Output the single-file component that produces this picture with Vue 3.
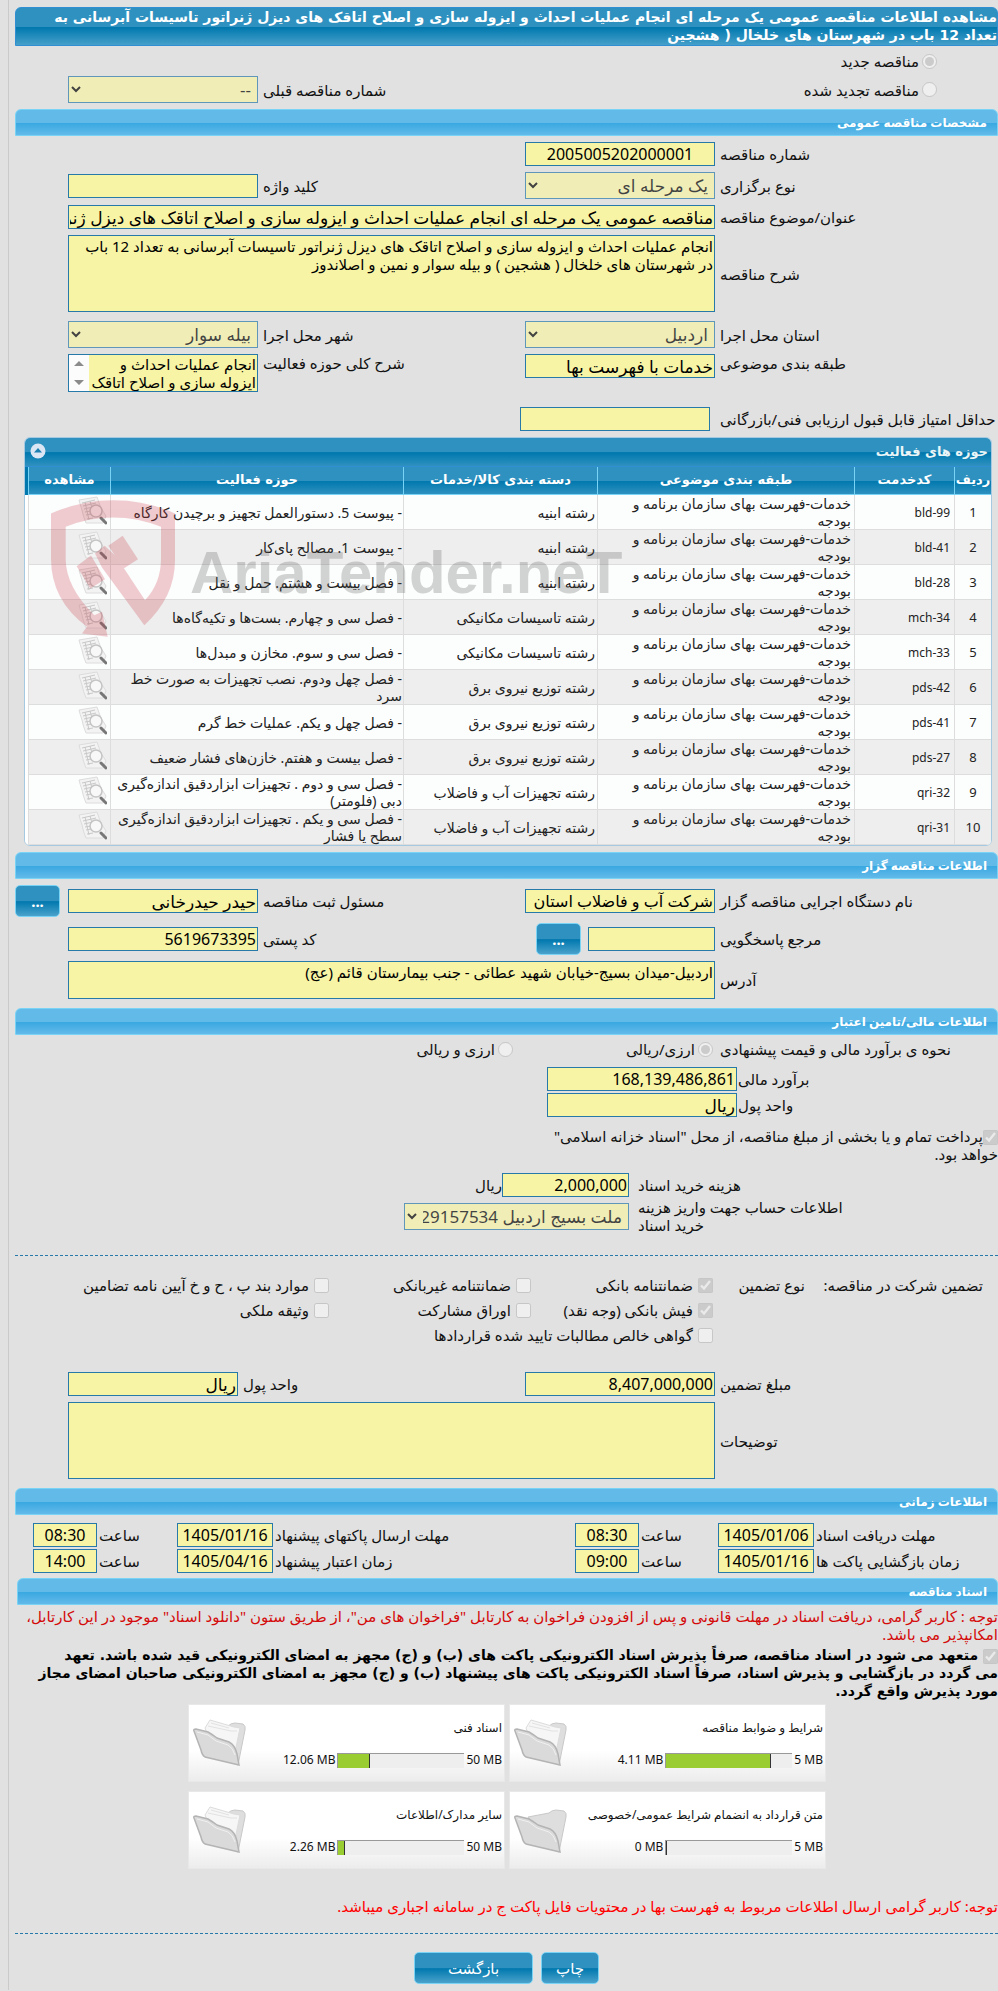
<script setup>
import { ref } from 'vue'

const category = 'خدمات-فهرست بهای سازمان برنامه و بودجه'
const activities = [
  { code: 'bld-99', group: 'رشته ابنیه', field: '- پیوست 5. دستورالعمل تجهیز و برچیدن کارگاه' },
  { code: 'bld-41', group: 'رشته ابنیه', field: '- پیوست 1. مصالح پای‌کار' },
  { code: 'bld-28', group: 'رشته ابنیه', field: '- فصل بیست و هشتم. حمل و نقل' },
  { code: 'mch-34', group: 'رشته تاسیسات مکانیکی', field: '- فصل سی و چهارم. بست‌ها و تکیه‌گاه‌ها' },
  { code: 'mch-33', group: 'رشته تاسیسات مکانیکی', field: '- فصل سی و سوم. مخازن و مبدل‌ها' },
  { code: 'pds-42', group: 'رشته توزیع نیروی برق', field: '- فصل چهل ودوم. نصب تجهیزات به صورت خط سرد' },
  { code: 'pds-41', group: 'رشته توزیع نیروی برق', field: '- فصل چهل و یکم. عملیات خط گرم' },
  { code: 'pds-27', group: 'رشته توزیع نیروی برق', field: '- فصل بیست و هفتم. خازن‌های فشار ضعیف' },
  { code: 'qri-32', group: 'رشته تجهیزات آب و فاضلاب', field: '- فصل سی و دوم . تجهیزات ابزاردقیق اندازه‌گیری دبی (فلومتر)' },
  { code: 'qri-31', group: 'رشته تجهیزات آب و فاضلاب', field: '- فصل سی و یکم . تجهیزات ابزاردقیق اندازه‌گیری سطح یا فشار' },
]
const folders = [
  { title: 'شرایط و ضوابط مناقصه', used: '4.11 MB', max: '5 MB', pct: 83, full: true },
  { title: 'اسناد فنی', used: '12.06 MB', max: '50 MB', pct: 25, full: true },
  { title: 'متن قرارداد به انضمام شرایط عمومی/خصوصی', used: '0 MB', max: '5 MB', pct: 0, full: false },
  { title: 'سایر مدارک/اطلاعات', used: '2.26 MB', max: '50 MB', pct: 5, full: true },
]
const schedule = [
  [
    { id: 'get', label: 'مهلت دریافت اسناد', date: '1405/01/06', time: '08:30' },
    { id: 'send', label: 'مهلت ارسال پاکتهای پیشنهاد', date: '1405/01/16', time: '08:30' },
  ],
  [
    { id: 'open', label: 'زمان بازگشایی پاکت ها', date: '1405/01/16', time: '09:00' },
    { id: 'valid', label: 'زمان اعتبار پیشنهاد', date: '1405/04/16', time: '14:00' },
  ],
]
const tableOpen = ref(true)
</script>

<template>
  <main class="page" dir="rtl">
    <h1 class="title-bar">
      <span>مشاهده اطلاعات مناقصه عمومی یک مرحله ای انجام عملیات احداث و ایزوله سازی و اصلاح اتاقک های دیزل ژنراتور تاسیسات آبرسانی به</span>
      <span>تعداد 12 باب در شهرستان های خلخال ( هشجین</span>
    </h1>

    <div class="row kind">
      <label class="radio"><input type="radio" name="kind" checked disabled>مناقصه جدید</label>
    </div>
    <div class="row">
      <label class="radio"><input type="radio" name="kind" disabled>مناقصه تجدید شده</label>
      <label class="lbl third" for="prev">شماره مناقصه قبلی</label>
      <select id="prev" class="fourth" disabled><option>--</option></select>
    </div>

    <h2 class="bar">مشخصات مناقصه عمومی</h2>
    <div class="row">
      <label class="lbl" for="num">شماره مناقصه</label>
      <input id="num" class="center" value="2005005202000001" readonly>
    </div>
    <div class="row">
      <label class="lbl" for="type">نوع برگزاری</label>
      <select id="type" disabled><option>یک مرحله ای</option></select>
      <label class="lbl" for="key">کلید واژه</label>
      <input id="key" readonly>
    </div>
    <div class="row">
      <label class="lbl" for="subj">عنوان/موضوع مناقصه</label>
      <input id="subj" class="wide large" value="مناقصه عمومی یک مرحله ای انجام عملیات احداث و ایزوله سازی و اصلاح اتاقک های دیزل ژنراتور تاسیسات آبرسانی به تعداد 12 باب" readonly>
    </div>
    <div class="row">
      <label class="lbl" for="desc">شرح مناقصه</label>
      <textarea id="desc" class="wide tall" readonly>انجام عملیات احداث و ایزوله سازی و اصلاح اتاقک های دیزل ژنراتور تاسیسات آبرسانی به تعداد 12 باب
در شهرستان های خلخال ( هشجین ) و بیله سوار و نمین و اصلاندوز</textarea>
    </div>
    <div class="row spaced">
      <label class="lbl" for="prov">استان محل اجرا</label>
      <select id="prov" disabled><option>اردبیل</option></select>
      <label class="lbl" for="city">شهر محل اجرا</label>
      <select id="city" disabled><option>بیله سوار</option></select>
    </div>
    <div class="row top">
      <label class="lbl" for="cat">طبقه بندی موضوعی</label>
      <input id="cat" class="large" value="خدمات با فهرست بها" readonly>
      <label class="lbl" for="scope">شرح کلی حوزه فعالیت</label>
      <div class="scroller">
        <textarea id="scope" readonly>انجام عملیات احداث و
ایزوله سازی و اصلاح اتاقک</textarea>
        <svg viewBox="0 0 20 36" width="20" height="36" aria-hidden="true">
          <rect width="20" height="36" fill="#fcfcfc" />
          <path d="M5 11 L10 6 L15 11 Z M5 25 L15 25 L10 30 Z" fill="#8b8b8b" />
        </svg>
      </div>
    </div>
    <div class="row score">
      <label class="lbl" for="score">حداقل امتیاز قابل قبول ارزیابی فنی/بازرگانی</label>
      <input id="score" readonly>
    </div>

    <section class="panel">
      <header class="panel-head">
        <h3>حوزه های فعالیت</h3>
        <button type="button" class="toggle" aria-label="جمع کردن" @click="tableOpen = !tableOpen">
          <svg viewBox="0 0 16 16" width="16" height="16"><circle cx="8" cy="8" r="7.5" fill="#dbe6f5" /><path d="M4 9.500 L8 5 L12 9.500 Z" fill="#1c7fb0" /></svg>
        </button>
      </header>
      <table v-show="tableOpen">
        <colgroup><col class="c1"><col class="c2"><col class="c3"><col class="c4"><col><col class="c6"></colgroup>
        <thead>
          <tr><th>ردیف</th><th>کدخدمت</th><th>طبقه بندی موضوعی</th><th>دسته بندی کالا/خدمات</th><th>حوزه فعالیت</th><th>مشاهده</th></tr>
        </thead>
        <tbody>
          <tr v-for="(a, i) in activities" :key="a.code">
            <td class="idx">{{ i + 1 }}</td>
            <td class="code">{{ a.code }}</td>
            <td>{{ category }}</td>
            <td class="group">{{ a.group }}</td>
            <td class="field">{{ a.field }}</td>
            <td class="view">
              <button type="button" aria-label="مشاهده">
                <svg viewBox="0 0 29 29" width="29" height="29">
                  <path d="M1 4 L19 1 Q21 7 23 12 L28 20 L25 27 L8 27 Q5 20 4 14 Q2 8 1 4 Z" fill="#f3f3f3" stroke="#dcdcdc" />
                  <path d="M4 7 L17 4 M5 10 L18 7 M6 13 L15 11 M7 16 L13 15 M8 19 L13 18 M9 23 L15 22 M7 6 L11 24 M12 5 L14 12" stroke="#c8c8c8" fill="none" />
                  <circle cx="18" cy="15" r="6" fill="#f8f8f8" fill-opacity=".85" stroke="#c4c4c4" stroke-width="1.500" />
                  <path d="M23 22 L28 27" stroke="#777" stroke-width="3" stroke-linecap="round" />
                </svg>
              </button>
            </td>
          </tr>
        </tbody>
      </table>
      <div class="mark" aria-hidden="true">
        <svg viewBox="147 207 378 416" width="126" height="139">
          <path fill="#c93a48" d="M150 250 Q240 210 337 210 Q435 210 522 250 V390 Q522 500 430 585 L303 412 L282 370 L311 347 L345 378 L432 510 Q480 460 480 385 V290 Q410 262 337 262 Q262 262 194 290 V385 Q194 470 280 555 L303 545 L320 620 L243 610 L258 590 Q150 510 150 385 Z" />
          <path fill="#c93a48" d="M322 347 L365 317 L411 387 L368 415 Z M227 408 L270 376 L312 447 L268 475 Z" />
        </svg>
        <span>AriaTender.neT</span>
      </div>
    </section>

    <h2 class="bar">اطلاعات مناقصه گزار</h2>
    <div class="row owner">
      <label class="lbl" for="org">نام دستگاه اجرایی مناقصه گزار</label>
      <input id="org" value="شرکت آب و فاضلاب استان" readonly>
      <label class="lbl" for="resp">مسئول ثبت مناقصه</label>
      <input id="resp" class="large" value="حیدر حیدرخانی" readonly>
      <button type="button" class="btn dots">...</button>
    </div>
    <div class="row owner">
      <label class="lbl" for="ref">مرجع پاسخگویی</label>
      <div class="pair"><input id="ref" readonly><button type="button" class="btn dots">...</button></div>
      <label class="lbl" for="zip">کد پستی</label>
      <input id="zip" class="num" value="5619673395" readonly>
    </div>
    <div class="row">
      <label class="lbl" for="addr">آدرس</label>
      <textarea id="addr" class="wide short" readonly>اردبیل-میدان بسیج-خیابان شهید عطائی - جنب بیمارستان قائم (عج)</textarea>
    </div>

    <h2 class="bar after">اطلاعات مالی/تامین اعتبار</h2>
    <div class="row price" role="radiogroup" aria-labelledby="price">
      <span id="price" class="lbl">نحوه ی برآورد مالی و قیمت پیشنهادی</span>
      <div class="options">
        <label><input type="radio" name="cur" checked disabled>ارزی/ریالی</label>
        <label><input type="radio" name="cur" disabled>ارزی و ریالی</label>
      </div>
    </div>
    <div class="money">
      <label for="est">برآورد مالی</label><input id="est" class="num" value="168,139,486,861" readonly>
      <label for="unit">واحد پول</label><input id="unit" class="large" value="ریال" readonly>
    </div>
    <label class="treasury"><input type="checkbox" checked disabled><span>پرداخت تمام و یا بخشی از مبلغ مناقصه، از محل "اسناد خزانه اسلامی"</span><span class="line">خواهد بود.</span></label>
    <div class="cost">
      <label for="cost">هزینه خرید اسناد</label>
      <div class="amount"><input id="cost" class="num" value="2,000,000" readonly><span>ریال</span></div>
      <label for="acc">اطلاعات حساب جهت واریز هزینه<br>خرید اسناد</label>
      <select id="acc" disabled><option>ملت بسیج اردبیل 29157534</option></select>
    </div>

    <hr>
    <div class="guarantee">
      <span class="g-title">تضمین شرکت در مناقصه:</span>
      <span class="g-type">نوع تضمین</span>
      <div class="checks">
        <label><input type="checkbox" checked disabled>ضمانتنامه بانکی</label>
        <label><input type="checkbox" disabled>ضمانتنامه غیربانکی</label>
        <label><input type="checkbox" disabled>موارد بند پ ، ح و خ آیین نامه تضامین</label>
        <label><input type="checkbox" checked disabled>فیش بانکی (وجه نقد)</label>
        <label><input type="checkbox" disabled>اوراق مشارکت</label>
        <label><input type="checkbox" disabled>وثیقه ملکی</label>
        <label class="long"><input type="checkbox" disabled>گواهی خالص مطالبات تایید شده قراردادها</label>
      </div>
    </div>
    <div class="row deposit">
      <label class="lbl" for="dep">مبلغ تضمین</label>
      <input id="dep" class="num" value="8,407,000,000" readonly>
      <label class="lbl" for="depunit">واحد پول</label>
      <input id="depunit" class="large" value="ریال" readonly>
    </div>
    <div class="row">
      <label class="lbl" for="notes">توضیحات</label>
      <textarea id="notes" class="wide tall" readonly></textarea>
    </div>

    <h2 class="bar after">اطلاعات زمانی</h2>
    <div class="times">
      <template v-for="line in schedule">
        <template v-for="t in line" :key="t.id">
          <label :for="t.id + 'd'">{{ t.label }}</label>
          <input :id="t.id + 'd'" class="center" :value="t.date" readonly>
          <label :for="t.id + 't'">ساعت</label>
          <input :id="t.id + 't'" class="center" :value="t.time" readonly>
        </template>
      </template>
    </div>

    <h2 class="bar docs">اسناد مناقصه</h2>
    <p class="note">
      <span>توجه : کاربر گرامی، دریافت اسناد در مهلت قانونی و پس از افزودن فراخوان به کارتابل "فراخوان های من"، از طریق ستون "دانلود اسناد" موجود در این کارتابل،</span>
      <span>امکانپذیر می باشد.</span>
    </p>
    <label class="commit">
      <span><input type="checkbox" checked disabled> متعهد می شود در اسناد مناقصه، صرفاً پذیرش اسناد الکترونیکی پاکت های (ب) و (ج) مجهز به امضای الکترونیکی قید شده باشد. تعهد</span>
      <span>می گردد در بازگشایی و پذیرش اسناد، صرفاً اسناد الکترونیکی پاکت های پیشنهاد (ب) و (ج) مجهز به امضای الکترونیکی صاحبان امضای مجاز</span>
      <span>مورد پذیرش واقع گردد.</span>
    </label>
    <div class="folders">
      <article v-for="f in folders" :key="f.title" class="folder">
        <div class="info">
          <a href="#">{{ f.title }}</a>
          <div class="usage">
            <span>{{ f.max }}</span>
            <div class="track"><i :style="{ width: f.pct + '%' }"></i></div>
            <span>{{ f.used }}</span>
          </div>
        </div>
        <svg viewBox="0 0 54 48" width="54" height="48" aria-hidden="true">
          <path d="M14 11 L35 7 Q38 4 42 4 L50 5 Q53 7 52 11 L45 46 L30 40 Z" fill="#dedede" stroke="#c9c9c9" />
          <path v-if="f.full" d="M12 9 L17 1 L41 8 L47 9 L41 38 L20 30 Z" fill="#f6f6f6" stroke="#dcdcdc" />
          <path v-if="f.full" d="M15 7 L38 12 L44 12 M18 4 L36 9" fill="none" stroke="#e2e2e2" />
          <path d="M1 12 Q0 10 3 10 L15 13 Q20 16 24 19 L36 23 Q42 26 44 35 L46 46 L12 38 Q9 36 8 31 Z" fill="#dadada" stroke="#b4b4b4" stroke-width="1.500" />
          <path d="M4 13 L15 16 L23 22 L35 26 Q40 29 42 36" fill="none" stroke="#f0f0f0" />
        </svg>
      </article>
    </div>
    <p class="alert">توجه: کاربر گرامی ارسال اطلاعات مربوط به فهرست بها در محتویات فایل پاکت ج در سامانه اجباری میباشد.</p>
    <hr>
    <div class="actions">
      <button type="button" class="btn print">چاپ</button>
      <button type="button" class="btn back">بازگشت</button>
    </div>
  </main>
</template>

<style>
html { background: #e1e1e1; overflow-x: hidden; }
</style>

<style scoped>
* { box-sizing: border-box; }
.page {
  margin-left: 8px; padding: 7px 0 6px 6px; border-left: 1px solid #cacaca;
  font-family: "Noto Sans", "DejaVu Sans", sans-serif; font-size: 15px; line-height: 18px; color: #111; overflow: hidden;
}
.title-bar {
  margin: 0; height: 39px; border: 1px solid #2f8fd2; border-radius: 6px 6px 0 0; color: #fff;
  font-family: "DejaVu Sans", sans-serif; font-size: 14px; line-height: 18px; white-space: nowrap;
  background: linear-gradient(#2f91bf 0 50%, #0078ae 52%, #459fc9);
}
.title-bar span, .note span, .commit span { display: block; white-space: nowrap; }
.bar {
  margin: 6px 0 0; height: 27px; padding: 0 10px; border: 1px solid #78d3f5; border-radius: 6px 6px 0 0;
  font-size: 12px; line-height: 25px; color: #fff; background: linear-gradient(#62bae9 0 50%, #39a8e1 52%, #62bae9);
}
.bar.after { margin-top: 9px; }
.bar.docs { margin: 5px 0 0 2px; }
.row {
  display: grid; grid-template-columns: 278px 190px minmax(0, 1fr) 190px; column-gap: 5px;
  padding-left: 53px; margin-top: 6px; align-items: center;
}
.lbl { text-align: end; white-space: nowrap; }
.wide { grid-column: 2 / 5; }
.third { grid-column: 3; }
.fourth { grid-column: 4; }
.row.kind { height: 30px; margin-top: 0; }
.row.kind + .row { margin-top: 0; }
.row.spaced { margin-top: 9px; }
.row.top { align-items: start; }
.row.score { margin-top: 15px; column-gap: 10px; }
.radio { display: flex; align-items: center; gap: 3px; padding-right: 61px; }
input, select, textarea {
  display: block; width: 100%; margin: 0; padding: 0 1px; height: 24px; border: 1px solid #2779aa; border-radius: 0;
  background: #f7f4a5; color: #000; font-family: inherit; font-size: 16px; outline: none;
}
input.large { font-size: 17px; }
select { height: 27px; padding: 0 2px; opacity: .7; font-size: 17px; }
textarea { font-size: 15px; line-height: 18px; resize: none; overflow: hidden; padding: 1px; }
input[type=radio], input[type=checkbox] { width: 15px; height: 15px; padding: 0; flex: none; }
.tall { height: 77px; }
.short { height: 38px; }
.center { text-align: center; }
.num { direction: ltr; text-align: right; }
.scroller { display: flex; border: 1px solid #2779aa; }
.scroller textarea { border: 0; height: 36px; flex: 1; min-width: 0; white-space: pre; padding: 0 1px; }

.panel { position: relative; margin: 6px 6px 0 9px; border: 1px solid #a6c9e2; border-radius: 6px; background: #fff; overflow: hidden; }
.panel-head {
  display: flex; align-items: center; justify-content: space-between; height: 29px; padding: 0 3px 0 5px;
  color: #eaf5f7; border-bottom: 1px solid #2f8fd2; background: linear-gradient(#2f91bf 0 50%, #0078ae 52%, #2f91bf);
}
.panel-head h3 { margin: 0; font-family: "DejaVu Sans", sans-serif; font-size: 13px; }
.toggle, .view button { display: block; padding: 0; border: 0; background: none; }
table { width: 100%; table-layout: fixed; border-collapse: separate; border-spacing: 0; padding-left: 3px; background: linear-gradient(#0078ae 0 28px, #fff 28px); }
.c1 { width: 37px; } .c2 { width: 100px; } .c3 { width: 257px; } .c4 { width: 194px; } .c6 { width: 82px; }
th {
  height: 28px; padding: 0 0 2px; color: #fff; font-family: "DejaVu Sans", sans-serif; font-size: 13px; border-left: 1px solid #78d3f5; border-bottom: 1px solid #78d3f5;
  background: linear-gradient(#2f91bf 0 50%, #0078ae 52%, #2f91bf); white-space: nowrap;
}
td { height: 35px; padding: 0 3px; border-left: 1px solid #ddd; border-bottom: 1px solid #ddd; font-size: 14px; line-height: 17px; color: #222; background: #fcfdfd; }
tbody tr:nth-child(even) td { background: #eee; }
td.idx { text-align: center; font-size: 13px; }
td.code { direction: ltr; text-align: right; font-size: 12px; }
td.field { padding: 0 1px; }
td.group { padding: 0 2px; }
.mark { position: absolute; left: 25px; top: 61px; display: flex; flex-direction: row-reverse; gap: 14px; opacity: .25; pointer-events: none; }
.mark span { font: 700 60px/1 "Liberation Sans", sans-serif; color: #555; direction: ltr; padding-top: 44px; white-space: nowrap; }

.btn {
  border: 1px solid #78d3f5; border-radius: 5px; color: #fff; font-family: inherit; font-size: 15px; height: 32px; padding: 0;
  background: linear-gradient(#2f91bf 0 50%, #0078ae 52%, #4aa2cb);
}
.dots { width: 45px; font-weight: 700; }
.row.owner { grid-template-columns: 278px 190px minmax(0, 1fr) 190px 48px; padding-left: 0; }
.row.owner .dots { justify-self: end; }
.pair { display: flex; gap: 7px; align-items: center; }
.pair input { width: 127px; }
.pair .btn { flex: none; }
.row.price { height: 28px; margin-top: 0; }
.options { grid-column: 2 / 5; display: flex; padding-right: 2px; }
.options label { display: flex; align-items: center; gap: 3px; width: 200px; }
.money { display: grid; grid-template-columns: 260px 190px; gap: 2px 1px; margin-top: 4px; align-items: center; text-align: end; }
.money input { text-align: start; }
.money input.num { text-align: right; }
.treasury { display: block; margin-top: 10px; }
.treasury input { display: inline-block; vertical-align: middle; }
.line { display: block; }
.cost { display: grid; grid-template-columns: 360px 225px; column-gap: 9px; row-gap: 1px; margin-top: 10px; align-items: center; text-align: end; }
.amount { display: flex; align-items: center; }
.amount input { width: 127px; }
hr { margin: 21px 0 0; border: 0; border-top: 1px dashed #2779aa; }
.guarantee { display: flex; margin-top: 17px; padding-right: 15px; line-height: 25px; }
.g-title { width: 178px; }
.g-type { width: 92px; }
.checks { flex: 1; display: grid; grid-template-columns: 182px 202px 1fr; }
.checks label { display: flex; align-items: center; gap: 5px; white-space: nowrap; }
.checks .long { grid-column: span 3; }
.row.deposit { margin-top: 24px; grid-template-columns: 278px 190px minmax(0, 1fr) 170px; }
.times { display: grid; grid-template-columns: 182px 96px 75px 64px minmax(0, 1fr) 96px 76px 64px; gap: 2px; margin-top: 8px; padding-left: 18px; align-items: center; text-align: end; }
.note { margin: 2px 0 0; color: #d40b0b; }
.commit { display: block; margin-top: 3px; font-family: "DejaVu Sans", sans-serif; font-size: 14px; font-weight: 700; color: #000; }
.commit input { display: inline-block; vertical-align: middle; }
.folders { display: grid; grid-template-columns: 317px 317px; gap: 9px 4px; margin: 4px 172px 0 0; }
.folder { height: 78px; display: flex; justify-content: space-between; align-items: center; padding: 0 2px 0 4px; border: 1px solid #e8e8e8; background: linear-gradient(#fff 60%, #ececec); }
.info { align-self: stretch; display: flex; flex-direction: column; padding-top: 14px; gap: 14px; font-size: 12px; }
.info a { color: #111; text-decoration: none; }
.usage { display: flex; align-items: center; gap: 2px; direction: rtl; }
.usage span { direction: ltr; }
.track { width: 127px; height: 15px; border-top: 1px solid #999; border-left: 1px solid #999; background: #eee; direction: ltr; }
.track i { display: block; height: 14px; background: #9acd32; border-right: 1px solid #333; }
.alert { margin: 28px 0 0; color: #f00; }
.alert + hr { margin-top: 18px; }
.actions { display: flex; justify-content: center; gap: 8px; margin-top: 18px; }
.print { width: 58px; }
.back { width: 119px; }
</style>
